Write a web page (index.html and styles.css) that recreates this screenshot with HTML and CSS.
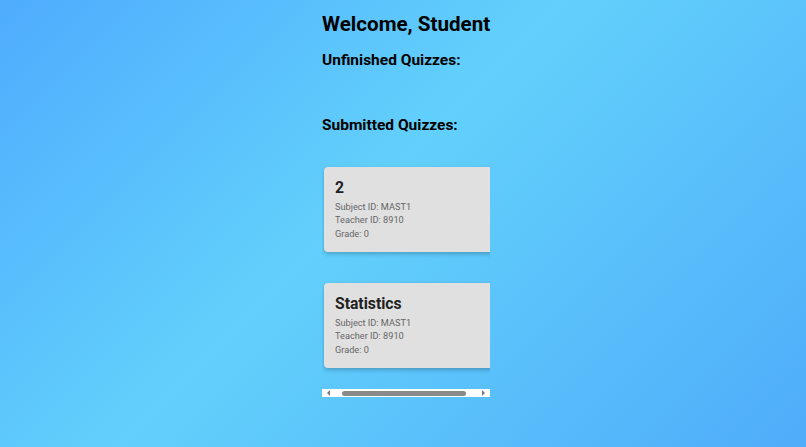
FILE: index.html
```html
<!DOCTYPE html>
<html lang="en">
<head>
<meta charset="utf-8">
<title>Student Dashboard</title>
<link rel="stylesheet" href="styles.css">
</head>
<body>
<main class="dashboard">
  <h1 class="welcome">Welcome, Student</h1>
  <section class="section">
    <h2 class="section-title">Unfinished Quizzes:</h2>
    <div class="quiz-list"></div>
  </section>
  <section class="section">
    <h2 class="section-title">Submitted Quizzes:</h2>
    <div class="quiz-scroll">
      <div class="quiz-list">
        <article class="quiz-card">
          <h3 class="quiz-title">2</h3>
          <p class="quiz-meta">Subject ID: MAST1</p>
          <p class="quiz-meta">Teacher ID: 8910</p>
          <p class="quiz-meta">Grade: 0</p>
        </article>
        <article class="quiz-card">
          <h3 class="quiz-title">Statistics</h3>
          <p class="quiz-meta">Subject ID: MAST1</p>
          <p class="quiz-meta">Teacher ID: 8910</p>
          <p class="quiz-meta">Grade: 0</p>
        </article>
      </div>
    </div>
    <div class="hscroll" aria-hidden="true">
      <span class="arrow arrow-left"></span>
      <div class="track"><div class="thumb"></div></div>
      <span class="arrow arrow-right"></span>
    </div>
  </section>
</main>
</body>
</html>
```

FILE: styles.css
```css
html, body {
  margin: 0;
  padding: 0;
  height: 100%;
}

body {
  font-family: Roboto, "Liberation Sans", Arial, sans-serif;
  background: linear-gradient(135deg, #4facfe 0%, #62d0fb 45%, #4facfa 100%);
  background-attachment: fixed;
  color: #000;
  overflow: hidden;
}

.dashboard {
  width: 168px;
  margin: 0 auto;
  padding-left: 6px;
  padding-top: 12px;
}

.welcome {
  margin: 0;
  font-size: 20.6px;
  line-height: 24px;
  font-weight: 700;
  white-space: nowrap;
}

.section-title {
  margin: 14px 0 0;
  font-size: 15.5px;
  line-height: 20px;
  font-weight: 700;
  white-space: nowrap;
}

.quiz-scroll {
  margin-top: 22px;
  width: 168px;
  overflow-x: auto;
  overflow-y: hidden;
  scrollbar-width: none;
}

.quiz-scroll::-webkit-scrollbar {
  display: none;
}

.quiz-list {
  display: flex;
  flex-direction: column;
  gap: 31px;
  width: 175px;
  padding: 10px 0 21px 2px;
}

.quiz-card {
  background: #e0e0e0;
  border-radius: 4px;
  box-shadow: 0 2px 4px rgba(0, 0, 0, 0.22);
  padding: 10px 11px 11px;
  height: 85px;
  box-sizing: border-box;
  width: 171px;
}

.quiz-title {
  margin: 0 0 1px;
  font-size: 15.7px;
  line-height: 22px;
  font-weight: 700;
  color: #222;
}

.quiz-meta {
  margin: 0;
  font-size: 9.2px;
  line-height: 13.4px;
  color: #666;
}

.hscroll {
  display: flex;
  align-items: center;
  width: 168px;
  height: 8px;
  background: #fff;
  padding: 0 5px;
  box-sizing: border-box;
}

.arrow {
  width: 0;
  height: 0;
  border-top: 3px solid transparent;
  border-bottom: 3px solid transparent;
}

.arrow-left {
  border-right: 3px solid #7a7a7a;
}

.arrow-right {
  border-left: 3px solid #7a7a7a;
}

.track {
  flex: 1;
  display: flex;
  align-items: center;
}

.thumb {
  margin-left: 12px;
  width: 124px;
  height: 5px;
  border-radius: 3px;
  background: #8a8a8a;
}
```
